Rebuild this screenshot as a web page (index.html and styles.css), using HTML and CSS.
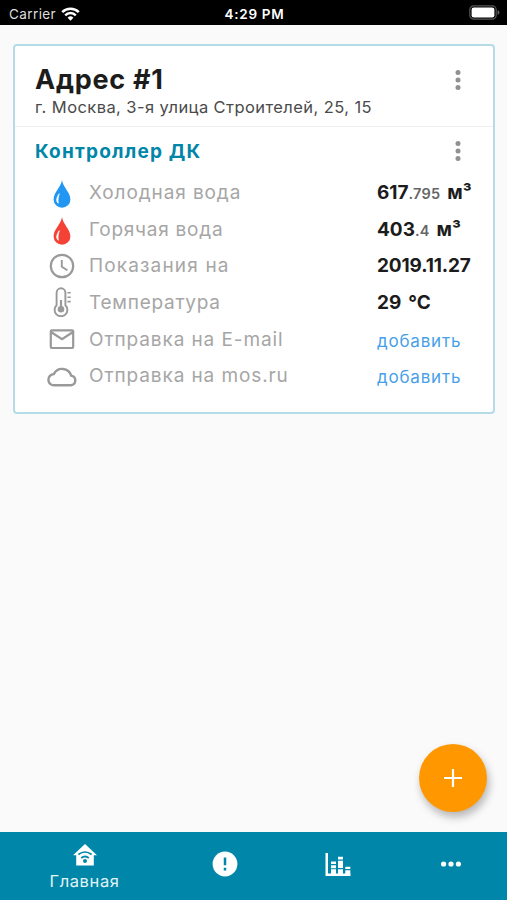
FILE: index.html
```html
<!DOCTYPE html>
<html lang="ru">
<head>
  <meta charset="UTF-8">
  <meta name="viewport" content="width=device-width">
  <title>Главная</title>
  <link rel="stylesheet" href="styles.css">
</head>

<body>

<header class="status">
  <div class="carrier">
    <span>Carrier</span>
    <svg width="19" height="14" viewBox="0 0 19 14" fill="none" stroke="#fff" stroke-width="2.5">
      <path d="M1.2 5.2a11.8 11.8 0 0 1 16.6 0"/>
      <path d="M4.2 8.3a7.5 7.5 0 0 1 10.6 0"/>
      <path d="M9.5 13.8L6.6 10.8a4.1 4.1 0 0 1 5.8 0z" fill="#fff" stroke="none"/>
    </svg>
  </div>
  <div class="time">4:29 PM</div>
  <svg class="battery" width="31" height="15" viewBox="0 0 31 15">
    <rect x=".8" y=".8" width="26.4" height="13.4" rx="4" fill="none" stroke="#555" stroke-width="1.2"/>
    <rect x="2.6" y="2.6" width="22.8" height="9.8" rx="2.2" fill="#fff"/>
    <path d="M28.6 5v5q1.8-.8 1.8-2.5t-1.8-2.5z" fill="#666"/>
  </svg>
</header>

<main class="content">
  <section class="card">
    <div class="address">
      <div>
        <h1>Адрес #1</h1>
        <p>г. Москва, 3-я улица Строителей, 25, 15</p>
      </div>
      <svg class="more" width="6" height="20" viewBox="0 0 6 20">
        <circle cx="3" cy="2.6" r="2.5"/><circle cx="3" cy="10" r="2.5"/><circle cx="3" cy="17.4" r="2.5"/>
      </svg>
    </div>

    <div class="device">
      <h2>Контроллер ДК</h2>
      <svg class="more" width="6" height="20" viewBox="0 0 6 20">
        <circle cx="3" cy="2.6" r="2.5"/><circle cx="3" cy="10" r="2.5"/><circle cx="3" cy="17.4" r="2.5"/>
      </svg>
    </div>

    <ul class="rows">
      <li>
        <svg class="icon drop" width="30" height="30" viewBox="0 0 30 30">
          <path d="M15 1C14.2 8 6.6 13.3 6.6 20.4a8.4 8.4 0 0 0 16.8 0C23.4 13.3 15.8 8 15 1z" fill="#2196f3"/>
          <path d="M12.3 14.7C9.700 18 8.500 22 11.300 24.300C10.700 21 11.200 18 12.300 14.700z" fill="#fff" stroke="#fff" stroke-width=".7"/>
        </svg>
        <span class="label cold">Холодная вода</span>
        <b class="value">617<small>.795</small> м³</b>
      </li>
      <li>
        <svg class="icon drop" width="30" height="30" viewBox="0 0 30 30">
          <path d="M15 1C14.2 8 6.6 13.3 6.6 20.4a8.4 8.4 0 0 0 16.8 0C23.4 13.3 15.8 8 15 1z" fill="#f44336"/>
          <path d="M12.3 14.7C9.700 18 8.500 22 11.300 24.300C10.700 21 11.200 18 12.300 14.700z" fill="#fff" stroke="#fff" stroke-width=".7"/>
        </svg>
        <span class="label hot">Горячая вода</span>
        <b class="value">403<small>.4</small> м³</b>
      </li>
      <li>
        <svg class="icon line" width="30" height="30" viewBox="0 0 30 30">
          <circle cx="15" cy="15" r="11.2"/>
          <path d="M14.8 9v6.8l5.6 3.4" stroke-width="1.9"/>
        </svg>
        <span class="label date">Показания на</span>
        <b class="value v-date">2019.11.27</b>
      </li>
      <li>
        <svg class="icon line" width="30" height="30" viewBox="0 0 30 30">
          <path d="M9.600 18.200V5.700a4.400 4.400 0 0 1 8.800 0v12.500a6.400 6.400 0 1 1-8.800 0z" stroke-width="1.9"/>
          <path d="M14 13v9"/>
          <circle cx="14" cy="22.3" r="3.3" fill="#999" stroke="none"/>
          <path d="M20.400 5.800h3.300M20.400 10.200h3.300M20.400 14.600h3.300" stroke-width="1.6"/>
        </svg>
        <span class="label temp">Температура</span>
        <b class="value">29 °C</b>
      </li>
      <li>
        <svg class="icon line" width="30" height="30" viewBox="0 0 30 30">
          <rect x="3.8" y="6.3" width="22.4" height="17.7" rx="1"/>
          <path d="M4 8l11 7.2L26 8"/>
        </svg>
        <span class="label mail">Отправка на E-mail</span>
        <a class="value link">добавить</a>
      </li>
      <li>
        <svg class="icon line" width="30" height="30" viewBox="0 0 30 30">
          <path d="M7.200 24.300h16.700a4.900 4.900 0 0 0 .3-9.700 9.400 9.400 0 0 0-17.400-1.500 5.600 5.600 0 0 0 .4 11.200z" stroke-width="2.4"/>
        </svg>
        <span class="label mos">Отправка на mos.ru</span>
        <a class="value link">добавить</a>
      </li>
    </ul>
  </section>
</main>

<button class="fab" title="Добавить">
  <svg width="18" height="18" viewBox="0 0 18 18" stroke="#fff" stroke-width="2.2"><path d="M9 0v18M0 9h18"/></svg>
</button>

<nav class="tabs">
  <a class="active">
    <svg width="24" height="22" viewBox="0 0 24 22">
      <path d="M12 0L0 11.200h3.200V21.500h17.600V11.200H24z" fill="#fff"/>
      <g fill="none" stroke="#0086a9" stroke-width="1.7">
        <path d="M5.400 10.500q6.600-5 13.200 0"/>
        <path d="M8.200 14q3.800-3 7.600 0"/>
      </g>
      <circle cx="12" cy="17" r="2" fill="#0086a9"/>
    </svg>
    <span>Главная</span>
  </a>
  <a>
    <svg width="26" height="26" viewBox="0 0 26 26">
      <circle cx="13" cy="13" r="12.4" fill="#fff"/>
      <path d="M13 6.500v7.800M13 16.800v2.600" stroke="#0086a9" stroke-width="2.5"/>
    </svg>
  </a>
  <a>
    <svg width="26" height="24" viewBox="0 0 26 24" fill="#fff">
      <path d="M.5 1H3v20.500h22.500V24H.5z"/>
      <path d="M6 9.600h5V12H6zM6 13.200h5v3H6zM6 17.200h5v5H6zM13 4.800h5v2.800h-5zM13 8.700h5v7.200h-5zM13 17.200h5v5h-5zM20.300 14.800h5v2.300h-5zM20.300 18.300h5v4h-5z"/>
    </svg>
  </a>
  <a>
    <svg width="20" height="6" viewBox="0 0 20 6" fill="#fff">
      <circle cx="2.600" cy="3" r="2.600"/><circle cx="10" cy="3" r="2.600"/><circle cx="17.400" cy="3" r="2.600"/>
    </svg>
  </a>
</nav>

</body>
</html>
```
FILE: styles.css
```css
* { box-sizing: border-box; }
body {
  margin: 0;
  height: 100vh;
  display: flex;
  flex-direction: column;
  background: #fafafa;
  color: #1c1c1c;
  font-family: Inter, "Noto Sans", sans-serif;
  overflow: hidden;
}
h1, h2, p, ul { margin: 0; padding: 0; }
h1, h2, p, .label, .value { white-space: nowrap; }

/* status bar */
.status {
  display: grid;
  grid-template-columns: 1fr auto 1fr;
  align-items: center;
  height: 25px;
  padding: 2px 7px 0 9px;
  background: #000;
  color: #fff;
  font-size: 13.5px;
}
.carrier { display: flex; align-items: center; gap: 5px; color: #ddd; letter-spacing: .4px; }
.time { font-weight: 600; letter-spacing: .7px; }
.battery { justify-self: end; margin-top: -2px; }

.content { flex: 1; padding: 19px 12px 19px 13px; }
.card {
  height: 370px;
  background: #fff;
  border: 2px solid #b5dce6;
  border-radius: 4px;
}
.address {
  display: flex;
  justify-content: space-between;
  height: 81px;
  padding: 17px 32px 0 20px;
  border-bottom: 1px solid #eee;
}
h1 { font-size: 27px; line-height: 34px; font-weight: 700; letter-spacing: .75px; }
.address p { font-size: 16.5px; line-height: 21px; color: #4a4a4a; letter-spacing: .42px; }
.more { flex: none; fill: #919191; }
.address .more { margin-top: 7px; }
.device {
  display: flex;
  justify-content: space-between;
  align-items: center;
  height: 48px;
  padding: 0 32px 0 20px;
}
h2 { font-size: 19px; font-weight: 700; color: #0086a9; letter-spacing: 1.2px; }

/* readings */
.rows { list-style: none; margin-top: -1px; }
.rows li {
  display: grid;
  grid-template-columns: 42px 288px 1fr;
  align-items: center;
  height: 36.7px;
  padding-left: 32px;
}
.drop { margin-top: 4px; }
.line { fill: none; stroke: #999; stroke-width: 2.2; }
.label { font-size: 19px; color: #a6a6a6; letter-spacing: .9px; }
.hot, .temp { letter-spacing: .75px; }
.date { letter-spacing: 1.15px; }
.value { font-size: 19px; font-weight: 700; word-spacing: 2.5px; }
.value small { font-size: 14.5px; font-weight: 600; color: #666; letter-spacing: .2px; }
.v-date { letter-spacing: -.15px; }
.link { font-size: 17px; font-weight: 400; color: #479fe8; padding-top: 3px; letter-spacing: .8px; }

.fab {
  position: absolute;
  right: 20px;
  bottom: 88px;
  width: 68px;
  height: 68px;
  display: grid;
  place-items: center;
  border: 0;
  border-radius: 50%;
  background: #ff9800;
  box-shadow: 2px 5px 9px rgba(0, 0, 0, .28);
}

/* bottom tabs */
.tabs {
  display: flex;
  height: 68px;
  background: #0086a9;
  color: #e4f4f8;
}
.tabs a {
  flex: 1;
  display: flex;
  flex-direction: column;
  align-items: center;
  justify-content: center;
  padding-bottom: 4px;
}
.tabs .active { flex: 1.5; gap: 5px; padding-top: 3px; padding-bottom: 0; }
.tabs span { font-size: 16.5px; line-height: 20px; letter-spacing: .6px; }
```
